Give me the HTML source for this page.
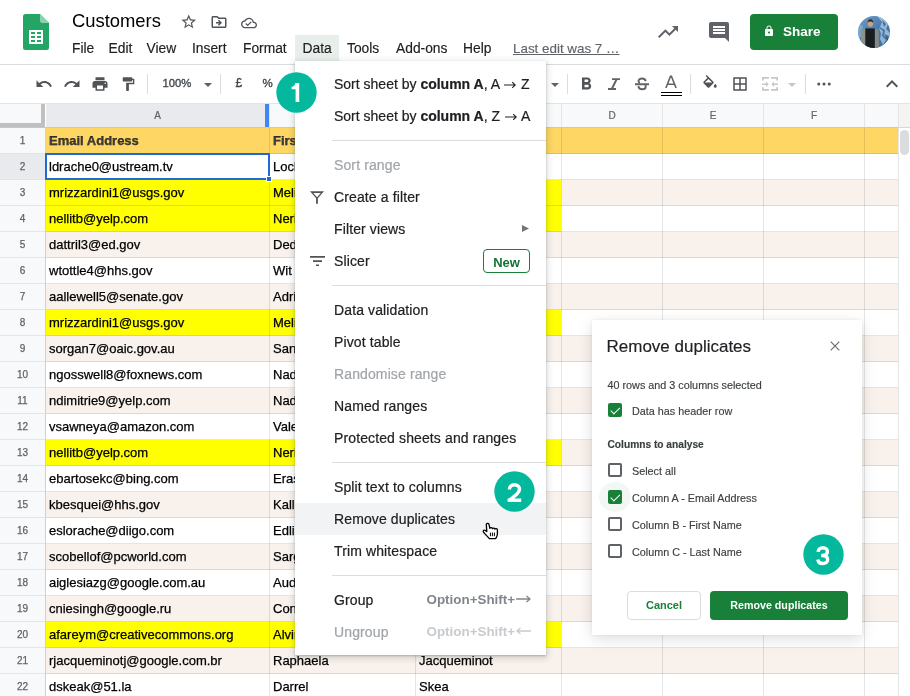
<!DOCTYPE html>
<html><head><meta charset="utf-8">
<style>
*{box-sizing:border-box;margin:0;padding:0}
html,body{width:910px;height:696px;overflow:hidden;background:#fff;font-family:"Liberation Sans",sans-serif;color:#202124}
#root{position:absolute;left:0;top:0;width:910px;height:696px;will-change:transform}
.a{position:absolute}
.t{position:absolute;white-space:nowrap}
.mn{position:absolute;top:39px;font-size:13.8px;color:#202124;line-height:20px;white-space:nowrap;-webkit-text-stroke:.15px currentColor}
.ic{position:absolute;fill:#505357}
.sep{position:absolute;top:74px;width:1px;height:20px;background:#dadce0}
.rh{left:0;width:45px;height:25px;font-size:10px;color:#5f6368;text-align:center;line-height:26px;-webkit-text-stroke:.25px #5f6368}
.cell{position:absolute;height:25px;font-size:13px;line-height:26px;padding-left:3px;white-space:nowrap;overflow:hidden;color:#000;-webkit-text-stroke:.25px #000}
.colh{position:absolute;top:104px;height:23px;font-size:10px;color:#5f6368;text-align:center;line-height:23px;background:#f8f9fa;-webkit-text-stroke:.2px #5f6368}
#menu{position:absolute;left:295px;top:61px;width:251px;height:594px;background:#fff;border-radius:0;box-shadow:0 2px 6px 2px rgba(60,64,67,.15),0 1px 2px rgba(60,64,67,.3)}
.mi{position:absolute;left:39px;font-size:14px;color:#202124;white-space:nowrap;line-height:16px;letter-spacing:.12px;-webkit-text-stroke:.2px currentColor}
.dis{color:#a0a4a8}
.msep{position:absolute;left:37px;width:214px;height:1px;background:#dadce0}
.badge{position:absolute;width:41px;height:41px;border-radius:50%;background:#04b89e;color:#fff;font-size:24px;font-weight:bold;text-align:center;line-height:44px}
#dlg{position:absolute;left:592px;top:320px;width:270px;height:315px;background:#fff;border-radius:0;box-shadow:0 4px 14px rgba(0,0,0,.13),0 0 3px rgba(0,0,0,.08)}
.dt{position:absolute;white-space:nowrap;font-size:10.8px;color:#3c4043;line-height:14px;-webkit-text-stroke:.15px #3c4043}
.cb{position:absolute;left:16px;width:14px;height:14px;border:2px solid #5f6368;border-radius:2px}
.cbon{background:#188038;border-color:#188038}
.cbon::after{content:"";position:absolute;left:2.8px;top:-0.2px;width:3.6px;height:7.6px;border:solid #fff;border-width:0 1.9px 1.9px 0;transform:rotate(45deg)}
</style></head><body><div id="root">

<!-- ===== GRID ===== -->
<div class="a" style="left:46px;top:128px;width:852px;height:26px;background:#fdd663"></div>
<div class="a rh" style="top:128px;background:#f8f9fa">1</div>
<div class="cell" style="left:46px;top:128px;width:223px;font-weight:bold;color:#3c3c3c;">Email Address</div>
<div class="cell" style="left:270px;top:128px;width:145px;font-weight:bold;color:#3c3c3c;">First Name</div>
<div class="cell" style="left:416px;top:128px;width:145px;font-weight:bold;color:#3c3c3c;">Last Name</div>
<div class="a" style="left:46px;top:154px;width:852px;height:26px;background:#fff"></div>
<div class="a rh" style="top:154px;background:#e8eaed">2</div>
<div class="cell" style="left:46px;top:154px;width:223px;">ldrache0@ustream.tv</div>
<div class="cell" style="left:270px;top:154px;width:145px;">Lockwood</div>
<div class="cell" style="left:416px;top:154px;width:145px;">Drache</div>
<div class="a" style="left:46px;top:180px;width:852px;height:26px;background:#f8f1ec"></div>
<div class="a" style="left:46px;top:180px;width:515px;height:26px;background:#ffff00"></div>
<div class="a rh" style="top:180px;background:#f8f9fa">3</div>
<div class="cell" style="left:46px;top:180px;width:223px;">mrizzardini1@usgs.gov</div>
<div class="cell" style="left:270px;top:180px;width:145px;">Melisande</div>
<div class="cell" style="left:416px;top:180px;width:145px;">Rizzardini</div>
<div class="a" style="left:46px;top:206px;width:852px;height:26px;background:#fff"></div>
<div class="a" style="left:46px;top:206px;width:515px;height:26px;background:#ffff00"></div>
<div class="a rh" style="top:206px;background:#f8f9fa">4</div>
<div class="cell" style="left:46px;top:206px;width:223px;">nellitb@yelp.com</div>
<div class="cell" style="left:270px;top:206px;width:145px;">Nerissa</div>
<div class="cell" style="left:416px;top:206px;width:145px;">Ellit</div>
<div class="a" style="left:46px;top:232px;width:852px;height:26px;background:#f8f1ec"></div>
<div class="a rh" style="top:232px;background:#f8f9fa">5</div>
<div class="cell" style="left:46px;top:232px;width:223px;">dattril3@ed.gov</div>
<div class="cell" style="left:270px;top:232px;width:145px;">Dedie</div>
<div class="cell" style="left:416px;top:232px;width:145px;">Attril</div>
<div class="a" style="left:46px;top:258px;width:852px;height:26px;background:#fff"></div>
<div class="a rh" style="top:258px;background:#f8f9fa">6</div>
<div class="cell" style="left:46px;top:258px;width:223px;">wtottle4@hhs.gov</div>
<div class="cell" style="left:270px;top:258px;width:145px;">Wit</div>
<div class="cell" style="left:416px;top:258px;width:145px;">Tottle</div>
<div class="a" style="left:46px;top:284px;width:852px;height:26px;background:#f8f1ec"></div>
<div class="a rh" style="top:284px;background:#f8f9fa">7</div>
<div class="cell" style="left:46px;top:284px;width:223px;">aallewell5@senate.gov</div>
<div class="cell" style="left:270px;top:284px;width:145px;">Adriena</div>
<div class="cell" style="left:416px;top:284px;width:145px;">Allewell</div>
<div class="a" style="left:46px;top:310px;width:852px;height:26px;background:#fff"></div>
<div class="a" style="left:46px;top:310px;width:515px;height:26px;background:#ffff00"></div>
<div class="a rh" style="top:310px;background:#f8f9fa">8</div>
<div class="cell" style="left:46px;top:310px;width:223px;">mrizzardini1@usgs.gov</div>
<div class="cell" style="left:270px;top:310px;width:145px;">Melisande</div>
<div class="cell" style="left:416px;top:310px;width:145px;">Rizzardini</div>
<div class="a" style="left:46px;top:336px;width:852px;height:26px;background:#f8f1ec"></div>
<div class="a rh" style="top:336px;background:#f8f9fa">9</div>
<div class="cell" style="left:46px;top:336px;width:223px;">sorgan7@oaic.gov.au</div>
<div class="cell" style="left:270px;top:336px;width:145px;">Sandy</div>
<div class="cell" style="left:416px;top:336px;width:145px;">Organ</div>
<div class="a" style="left:46px;top:362px;width:852px;height:26px;background:#fff"></div>
<div class="a rh" style="top:362px;background:#f8f9fa">10</div>
<div class="cell" style="left:46px;top:362px;width:223px;">ngosswell8@foxnews.com</div>
<div class="cell" style="left:270px;top:362px;width:145px;">Nadia</div>
<div class="cell" style="left:416px;top:362px;width:145px;">Gosswell</div>
<div class="a" style="left:46px;top:388px;width:852px;height:26px;background:#f8f1ec"></div>
<div class="a rh" style="top:388px;background:#f8f9fa">11</div>
<div class="cell" style="left:46px;top:388px;width:223px;">ndimitrie9@yelp.com</div>
<div class="cell" style="left:270px;top:388px;width:145px;">Nadine</div>
<div class="cell" style="left:416px;top:388px;width:145px;">Dimitrie</div>
<div class="a" style="left:46px;top:414px;width:852px;height:26px;background:#fff"></div>
<div class="a rh" style="top:414px;background:#f8f9fa">12</div>
<div class="cell" style="left:46px;top:414px;width:223px;">vsawneya@amazon.com</div>
<div class="cell" style="left:270px;top:414px;width:145px;">Valera</div>
<div class="cell" style="left:416px;top:414px;width:145px;">Sawney</div>
<div class="a" style="left:46px;top:440px;width:852px;height:26px;background:#f8f1ec"></div>
<div class="a" style="left:46px;top:440px;width:515px;height:26px;background:#ffff00"></div>
<div class="a rh" style="top:440px;background:#f8f9fa">13</div>
<div class="cell" style="left:46px;top:440px;width:223px;">nellitb@yelp.com</div>
<div class="cell" style="left:270px;top:440px;width:145px;">Nerissa</div>
<div class="cell" style="left:416px;top:440px;width:145px;">Ellit</div>
<div class="a" style="left:46px;top:466px;width:852px;height:26px;background:#fff"></div>
<div class="a rh" style="top:466px;background:#f8f9fa">14</div>
<div class="cell" style="left:46px;top:466px;width:223px;">ebartosekc@bing.com</div>
<div class="cell" style="left:270px;top:466px;width:145px;">Erasmus</div>
<div class="cell" style="left:416px;top:466px;width:145px;">Bartosek</div>
<div class="a" style="left:46px;top:492px;width:852px;height:26px;background:#f8f1ec"></div>
<div class="a rh" style="top:492px;background:#f8f9fa">15</div>
<div class="cell" style="left:46px;top:492px;width:223px;">kbesquei@hhs.gov</div>
<div class="cell" style="left:270px;top:492px;width:145px;">Kalli</div>
<div class="cell" style="left:416px;top:492px;width:145px;">Besque</div>
<div class="a" style="left:46px;top:518px;width:852px;height:26px;background:#fff"></div>
<div class="a rh" style="top:518px;background:#f8f9fa">16</div>
<div class="cell" style="left:46px;top:518px;width:223px;">eslorache@diigo.com</div>
<div class="cell" style="left:270px;top:518px;width:145px;">Edlin</div>
<div class="cell" style="left:416px;top:518px;width:145px;">Slorache</div>
<div class="a" style="left:46px;top:544px;width:852px;height:26px;background:#f8f1ec"></div>
<div class="a rh" style="top:544px;background:#f8f9fa">17</div>
<div class="cell" style="left:46px;top:544px;width:223px;">scobellof@pcworld.com</div>
<div class="cell" style="left:270px;top:544px;width:145px;">Sargent</div>
<div class="cell" style="left:416px;top:544px;width:145px;">Cobello</div>
<div class="a" style="left:46px;top:570px;width:852px;height:26px;background:#fff"></div>
<div class="a rh" style="top:570px;background:#f8f9fa">18</div>
<div class="cell" style="left:46px;top:570px;width:223px;">aiglesiazg@google.com.au</div>
<div class="cell" style="left:270px;top:570px;width:145px;">Audie</div>
<div class="cell" style="left:416px;top:570px;width:145px;">Iglesiaz</div>
<div class="a" style="left:46px;top:596px;width:852px;height:26px;background:#f8f1ec"></div>
<div class="a rh" style="top:596px;background:#f8f9fa">19</div>
<div class="cell" style="left:46px;top:596px;width:223px;">cniesingh@google.ru</div>
<div class="cell" style="left:270px;top:596px;width:145px;">Conny</div>
<div class="cell" style="left:416px;top:596px;width:145px;">Niesing</div>
<div class="a" style="left:46px;top:622px;width:852px;height:26px;background:#fff"></div>
<div class="a" style="left:46px;top:622px;width:515px;height:26px;background:#ffff00"></div>
<div class="a rh" style="top:622px;background:#f8f9fa">20</div>
<div class="cell" style="left:46px;top:622px;width:223px;">afareym@creativecommons.org</div>
<div class="cell" style="left:270px;top:622px;width:145px;">Alvina</div>
<div class="cell" style="left:416px;top:622px;width:145px;">Farey</div>
<div class="a" style="left:46px;top:648px;width:852px;height:26px;background:#f8f1ec"></div>
<div class="a rh" style="top:648px;background:#f8f9fa">21</div>
<div class="cell" style="left:46px;top:648px;width:223px;">rjacqueminotj@google.com.br</div>
<div class="cell" style="left:270px;top:648px;width:145px;">Raphaela</div>
<div class="cell" style="left:416px;top:648px;width:145px;">Jacqueminot</div>
<div class="a" style="left:46px;top:674px;width:852px;height:26px;background:#fff"></div>
<div class="a rh" style="top:674px;background:#f8f9fa">22</div>
<div class="cell" style="left:46px;top:674px;width:223px;">dskeak@51.la</div>
<div class="cell" style="left:270px;top:674px;width:145px;">Darrel</div>
<div class="cell" style="left:416px;top:674px;width:145px;">Skea</div>
<div class="a" style="left:0;top:153px;width:898px;height:1px;background:rgba(0,0,0,.10)"></div>
<div class="a" style="left:0;top:179px;width:898px;height:1px;background:rgba(0,0,0,.10)"></div>
<div class="a" style="left:0;top:205px;width:898px;height:1px;background:rgba(0,0,0,.10)"></div>
<div class="a" style="left:0;top:231px;width:898px;height:1px;background:rgba(0,0,0,.10)"></div>
<div class="a" style="left:0;top:257px;width:898px;height:1px;background:rgba(0,0,0,.10)"></div>
<div class="a" style="left:0;top:283px;width:898px;height:1px;background:rgba(0,0,0,.10)"></div>
<div class="a" style="left:0;top:309px;width:898px;height:1px;background:rgba(0,0,0,.10)"></div>
<div class="a" style="left:0;top:335px;width:898px;height:1px;background:rgba(0,0,0,.10)"></div>
<div class="a" style="left:0;top:361px;width:898px;height:1px;background:rgba(0,0,0,.10)"></div>
<div class="a" style="left:0;top:387px;width:898px;height:1px;background:rgba(0,0,0,.10)"></div>
<div class="a" style="left:0;top:413px;width:898px;height:1px;background:rgba(0,0,0,.10)"></div>
<div class="a" style="left:0;top:439px;width:898px;height:1px;background:rgba(0,0,0,.10)"></div>
<div class="a" style="left:0;top:465px;width:898px;height:1px;background:rgba(0,0,0,.10)"></div>
<div class="a" style="left:0;top:491px;width:898px;height:1px;background:rgba(0,0,0,.10)"></div>
<div class="a" style="left:0;top:517px;width:898px;height:1px;background:rgba(0,0,0,.10)"></div>
<div class="a" style="left:0;top:543px;width:898px;height:1px;background:rgba(0,0,0,.10)"></div>
<div class="a" style="left:0;top:569px;width:898px;height:1px;background:rgba(0,0,0,.10)"></div>
<div class="a" style="left:0;top:595px;width:898px;height:1px;background:rgba(0,0,0,.10)"></div>
<div class="a" style="left:0;top:621px;width:898px;height:1px;background:rgba(0,0,0,.10)"></div>
<div class="a" style="left:0;top:647px;width:898px;height:1px;background:rgba(0,0,0,.10)"></div>
<div class="a" style="left:0;top:673px;width:898px;height:1px;background:rgba(0,0,0,.10)"></div>
<div class="a" style="left:0;top:699px;width:898px;height:1px;background:rgba(0,0,0,.10)"></div>
<div class="a" style="left:45px;top:128px;width:1px;height:568px;background:#cfd0d1"></div>
<div class="a" style="left:269px;top:103px;width:1px;height:593px;background:rgba(0,0,0,.10)"></div>
<div class="a" style="left:415px;top:103px;width:1px;height:593px;background:rgba(0,0,0,.10)"></div>
<div class="a" style="left:561px;top:103px;width:1px;height:593px;background:rgba(0,0,0,.10)"></div>
<div class="a" style="left:662px;top:103px;width:1px;height:593px;background:rgba(0,0,0,.10)"></div>
<div class="a" style="left:763px;top:103px;width:1px;height:593px;background:rgba(0,0,0,.10)"></div>
<div class="a" style="left:864px;top:103px;width:1px;height:593px;background:rgba(0,0,0,.10)"></div>
<div class="a" style="left:898px;top:103px;width:1px;height:593px;background:rgba(0,0,0,.10)"></div>

<!-- column headers -->
<div class="a" style="left:0;top:103px;width:910px;height:1px;background:#e2e3e3"></div>
<div class="a" style="left:0;top:127px;width:898px;height:1px;background:#c8c8c8"></div>
<div class="a" style="left:0;top:104px;width:41px;height:19px;background:#f8f9fa"></div>
<div class="a" style="left:41px;top:104px;width:4px;height:23px;background:#c0c0c0"></div>
<div class="a" style="left:0;top:123px;width:45px;height:4px;background:#c0c0c0"></div>
<div class="colh" style="left:46px;width:223px;background:#e8eaed">A</div>
<div class="a" style="left:265px;top:104px;width:4px;height:23px;background:#4285f4"></div>
<div class="colh" style="left:270px;width:145px">B</div>
<div class="colh" style="left:416px;width:145px">C</div>
<div class="colh" style="left:562px;width:100px">D</div>
<div class="colh" style="left:663px;width:100px">E</div>
<div class="colh" style="left:764px;width:100px">F</div>
<div class="colh" style="left:865px;width:33px"></div>
<div class="a" style="left:899px;top:104px;width:11px;height:592px;background:#fff"></div>
<div class="a" style="left:899px;top:104px;width:11px;height:23px;background:#f4f4f4"></div>
<div class="a" style="left:898px;top:127px;width:12px;height:1px;background:#d8d8d8"></div>
<div class="a" style="left:900px;top:129.5px;width:9px;height:25px;border-radius:4.5px;background:#dadce0"></div>
<!-- selected cell A2 -->
<div class="a" style="left:45px;top:153px;width:225px;height:27px;border:2px solid #1f6bd6"></div>
<div class="a" style="left:266px;top:176px;width:6px;height:6px;background:#1f6bd6;border:1px solid #fff"></div>

<!-- ===== HEADER ===== -->
<div class="a" style="left:0;top:0;width:910px;height:64px;background:#fff"></div>
<svg class="a" style="left:23px;top:14px" width="26" height="36" viewBox="0 0 26 36">
  <path d="M2.5 0H17L26 9V33.5A2.5 2.5 0 0 1 23.5 36H2.5A2.5 2.5 0 0 1 0 33.5V2.5A2.5 2.5 0 0 1 2.5 0Z" fill="#23a566"/>
  <path d="M17 0L26 9H19.5A2.5 2.5 0 0 1 17 6.5Z" fill="#8ed1b1"/>
  <rect x="6" y="16" width="14" height="14" fill="#fff"/>
  <rect x="8" y="18" width="4" height="2" fill="#23a566"/><rect x="14" y="18" width="4" height="2" fill="#23a566"/>
  <rect x="8" y="22" width="4" height="2" fill="#23a566"/><rect x="14" y="22" width="4" height="2" fill="#23a566"/>
  <rect x="8" y="26" width="4" height="2" fill="#23a566"/><rect x="14" y="26" width="4" height="2" fill="#23a566"/>
</svg>
<div class="t" style="left:72px;top:11px;font-size:18.4px;line-height:20px;color:#000">Customers</div>
<!-- star -->
<svg class="ic" style="left:180px;top:13px" width="17.5" height="17.5" viewBox="0 0 24 24"><path d="M22 9.24l-7.19-.62L12 2 9.19 8.63 2 9.24l5.46 4.73L5.82 21 12 17.27 18.18 21l-1.63-7.03L22 9.24zM12 15.4l-3.76 2.27 1-4.28-3.32-2.88 4.38-.38L12 6.1l1.71 4.04 4.38.38-3.32 2.88 1 4.28L12 15.4z"/></svg>
<!-- folder move -->
<svg class="ic" style="left:209.5px;top:12.8px" width="18" height="18" viewBox="0 0 24 24"><path d="M20 6h-8l-2-2H4c-1.1 0-1.99.9-1.99 2L2 18c0 1.1.9 2 2 2h16c1.1 0 2-.9 2-2V8c0-1.1-.9-2-2-2zm0 12H4V6h5.17l2 2H20v10zm-7.84-6H8v2h4.16l-1.59 1.59L11.99 17 16 13.01 11.99 9l-1.41 1.41L12.16 12z"/></svg>
<!-- cloud done -->
<svg class="ic" style="left:241px;top:14.5px" width="16" height="16" viewBox="0 0 24 24"><path d="M19.35 10.04C18.67 6.59 15.64 4 12 4 9.11 4 6.6 5.64 5.35 8.04 2.34 8.36 0 10.91 0 14c0 3.310 2.69 6 6 6h13c2.76 0 5-2.24 5-5 0-2.64-2.05-4.78-4.650-4.96zM19 18H6c-2.21 0-4-1.79-4-4 0-2.05 1.53-3.76 3.56-3.97l1.07-.11.5-.95C8.08 7.14 9.94 6 12 6c2.62 0 4.88 1.860 5.39 4.43l.3 1.5 1.53.11c1.56.1 2.78 1.41 2.78 2.96 0 1.65-1.35 3-3 3zm-9-3.82l-2.09-2.09L6.5 13.5 10 17l6.01-6.01-1.41-1.41z"/></svg>

<div class="mn" style="left:72px">File</div>
<div class="mn" style="left:108.5px">Edit</div>
<div class="mn" style="left:146.5px">View</div>
<div class="mn" style="left:192px">Insert</div>
<div class="mn" style="left:243px">Format</div>
<div class="a" style="left:295px;top:35px;width:44px;height:26px;background:#e8efeb"></div>
<div class="mn" style="left:302.5px">Data</div>
<div class="mn" style="left:347px">Tools</div>
<div class="mn" style="left:396px">Add-ons</div>
<div class="mn" style="left:463px">Help</div>
<div class="mn" style="left:513px;color:#5f6368;text-decoration:underline;font-size:13.4px">Last edit was 7 …</div>

<!-- trending -->
<svg class="ic" style="left:656px;top:20px;fill:#5f6368" width="24" height="24" viewBox="0 0 24 24"><path d="M16 6l2.29 2.29-4.88 4.88-4-4L2 16.59 3.41 18l6-6 4 4 6.3-6.29L22 12V6z"/></svg>
<!-- comment -->
<svg class="ic" style="left:707px;top:20px;fill:#5f6368" width="24" height="24" viewBox="0 0 24 24"><path d="M21.99 4c0-1.1-.89-2-1.99-2H4c-1.1 0-2 .9-2 2v12c0 1.1.9 2 2 2h14l4 4-.01-18zM18 14H6v-2h12v2zm0-3H6V9h12v2zm0-3H6V6h12v2z"/></svg>
<!-- share -->
<div class="a" style="left:750px;top:14px;width:88px;height:36px;background:#188038;border-radius:4px"></div>
<svg class="a" style="left:763px;top:25px" width="12" height="12" viewBox="0 0 24 24" fill="#fff"><path d="M18 8h-1V6c0-2.76-2.24-5-5-5S7 3.24 7 6v2H6c-1.1 0-2 .9-2 2v10c0 1.1.9 2 2 2h12c1.1 0 2-.9 2-2V10c0-1.1-.9-2-2-2zm-6 9c-1.1 0-2-.9-2-2s.9-2 2-2 2 .9 2 2-.9 2-2 2zm3.1-9H8.9V6c0-1.71 1.39-3.1 3.1-3.1 1.71 0 3.1 1.39 3.1 3.1v2z"/></svg>
<div class="t" style="left:783px;top:24px;font-size:13.5px;line-height:16px;font-weight:bold;color:#fff">Share</div>
<!-- avatar -->
<svg class="a" style="left:858px;top:16px" width="32" height="32" viewBox="0 0 32 32">
  <defs><clipPath id="cp"><circle cx="16" cy="16" r="16"/></clipPath>
  <linearGradient id="ag" x1="0" y1="0" x2="1" y2="1"><stop offset="0" stop-color="#6f9cc4"/><stop offset=".5" stop-color="#4a7eb0"/><stop offset="1" stop-color="#3a6894"/></linearGradient></defs>
  <g clip-path="url(#cp)">
    <rect width="32" height="32" fill="url(#ag)"/>
    <path d="M19 0l5 6-2 5 5 3-1 6 6 3v-6l-4-4 2-5-5-8z" fill="#a9cbe6" opacity=".8"/>
    <path d="M21 12l4 3-1 5 4 4-3 5-3-6 1-5z" fill="#d7e8f3" opacity=".55"/>
    <path d="M24 4l4 4-2 3z M26 18l5 2-1 5z" fill="#2b4d70" opacity=".7"/>
    <path d="M0 8l5 2-1 6 3 4-7 2z" fill="#8fb6d6" opacity=".6"/>
    <path d="M3 13.5l4.5-1.5 2 20H3z" fill="#8d918a"/>
    <path d="M16.5 12.5l4 1.5.5 18h-4.5z" fill="#868a82"/>
    <rect x="7.3" y="12.4" width="9.5" height="20" fill="#1b1e20"/>
    <ellipse cx="12.4" cy="7.6" rx="2.7" ry="3.3" fill="#c8a288"/>
    <path d="M9.7 7c0-2.4 1.2-3.7 2.8-3.7s2.8 1.3 2.6 3.6c-.6-1-1.5-1.4-2.7-1.4S10.4 5.9 9.7 7z" fill="#2a231e"/>
  </g>
</svg>

<!-- ===== TOOLBAR ===== -->
<div class="a" style="left:0;top:64px;width:910px;height:1px;background:#dadce0"></div>
<svg class="ic" style="left:35px;top:75px" width="18" height="18" viewBox="0 0 24 24"><path d="M12.5 8c-2.65 0-5.05.99-6.9 2.6L2 7v9h9l-3.62-3.62c1.39-1.16 3.160-1.88 5.12-1.88 3.54 0 6.55 2.31 7.6 5.5l2.37-.78C21.08 11.03 17.15 8 12.5 8z"/></svg>
<svg class="ic" style="left:63px;top:75px" width="18" height="18" viewBox="0 0 24 24"><path d="M18.4 10.6C16.55 8.99 14.15 8 11.5 8c-4.65 0-8.58 3.03-9.96 7.22L3.9 16c1.05-3.19 4.05-5.5 7.6-5.5 1.95 0 3.73.72 5.12 1.88L13 16h9V7l-3.6 3.6z"/></svg>
<svg class="ic" style="left:91px;top:75px" width="18" height="18" viewBox="0 0 24 24"><path d="M19 8H5c-1.66 0-3 1.34-3 3v6h4v4h12v-4h4v-6c0-1.66-1.34-3-3-3zm-3 11H8v-5h8v5zm3-7c-.55 0-1-.45-1-1s.45-1 1-1 1 .45 1 1-.45 1-1 1zm-1-9H6v4h12V3z"/></svg>
<svg class="ic" style="left:119.7px;top:75.6px" width="16.4" height="16.4" viewBox="0 0 24 24"><path d="M18 4V3c0-.55-.45-1-1-1H5c-.55 0-1 .45-1 1v4c0 .55.45 1 1 1h12c.55 0 1-.45 1-1V6h1v4H9v11c0 .55.45 1 1 1h2c.55 0 1-.45 1-1v-9h8V4h-3z"/></svg>
<div class="sep" style="left:147px"></div>
<div class="t" style="left:162.5px;top:77px;font-size:11.3px;line-height:12px;color:#45494d;-webkit-text-stroke:.35px #45494d">100%</div>
<svg class="a" style="left:204px;top:82.5px" width="8" height="4" viewBox="0 0 8 4"><path d="M0 0h8L4 4z" fill="#5f6368"/></svg>
<div class="sep" style="left:220px"></div>
<div class="t" style="left:235.5px;top:77px;font-size:12px;line-height:12px;color:#45494d;-webkit-text-stroke:.35px #45494d">£</div>
<div class="t" style="left:262.5px;top:77px;font-size:11.5px;line-height:12px;color:#45494d;-webkit-text-stroke:.35px #45494d">%</div>

<svg class="a" style="left:550.8px;top:82.5px" width="8" height="4" viewBox="0 0 8 4"><path d="M0 0h8L4 4z" fill="#5f6368"/></svg>
<div class="sep" style="left:567px"></div>
<svg class="ic" style="left:575.5px;top:73.8px" width="20.5" height="20.5" viewBox="0 0 24 24"><path d="M15.6 10.79c.97-.67 1.65-1.77 1.65-2.79 0-2.26-1.75-4-4-4H7v14h7.04c2.09 0 3.71-1.7 3.71-3.79 0-1.52-.86-2.82-2.15-3.42zM10 6.5h3c.83 0 1.5.67 1.5 1.5s-.67 1.5-1.5 1.5h-3v-3zm3.5 9H10v-3h3.5c.83 0 1.5.67 1.5 1.5s-.67 1.5-1.5 1.5z"/></svg>
<svg class="a" style="left:605px;top:75px" width="18" height="18" viewBox="0 0 18 18"><path d="M7 3.2h8v1.9H7zM3 13.1h8V15H3zM10.4 4.5h2.2L8.1 13.6H5.9z" fill="#5f6368"/></svg>
<svg class="a" style="left:633px;top:75px" width="18" height="18" viewBox="0 0 18 18"><path d="M12.6 6.3C12.5 4.6 11.1 3.5 9 3.5 6.9 3.5 5.5 4.6 5.5 6.1c0 .9.5 1.5 1.2 1.9M2 9.3h14M5.4 11.2c.2 1.9 1.7 3.1 3.7 3.1 2.1 0 3.6-1 3.6-2.6 0-.6-.2-1.1-.6-1.5" stroke="#5f6368" stroke-width="1.9" fill="none"/></svg>
<svg class="a" style="left:664px;top:75px" width="14" height="14" viewBox="0 0 14 14"><path d="M1.9 13L6.5 1.2h.9L12.1 13M3.7 9.2h6.6" stroke="#5f6368" stroke-width="1.6" fill="none"/></svg>
<div class="a" style="left:661px;top:92px;width:21px;height:1px;background:#000"></div>
<div class="a" style="left:661px;top:95px;width:21px;height:1px;background:#000"></div>
<div class="sep" style="left:690px"></div>
<svg class="ic" style="left:701px;top:74.5px" width="18" height="18" viewBox="0 0 24 24"><path d="M16.56 8.94L7.62 0 6.21 1.41l2.38 2.38-5.15 5.15c-.59.59-.59 1.54 0 2.12l5.5 5.5c.29.29.68.44 1.06.44s.77-.15 1.06-.44l5.5-5.5c.59-.58.59-1.53 0-2.12zM5.21 10L10 5.21 14.79 10H5.21zM19 11.5s-2 2.17-2 3.5c0 1.1.9 2 2 2s2-.9 2-2c0-1.33-2-3.5-2-3.5z"/></svg>
<svg class="ic" style="left:731px;top:75px" width="18" height="18" viewBox="0 0 24 24"><path d="M3 3v18h18V3H3zm8 16H5v-6h6v6zm0-8H5V5h6v6zm8 8h-6v-6h6v6zm0-8h-6V5h6v6z"/></svg>
<svg class="a" style="left:760px;top:75px;fill:#c6c6c6" width="20" height="18" viewBox="0 0 20 18"><path d="M2.1 2.1h6.8v1.7H3.8v1.8H2.1zM11.2 2.1H18v3.5h-1.7V3.8h-5.1zM2.1 15.7h6.8V14H3.8v-1.8H2.1zM18 15.7h-6.8V14h5.1v-1.8H18zM2.1 8.4h5v1.5h-5zM6.1 6.4L8.6 9.15 6.1 11.9zM12.9 8.4H18v1.5h-5.1zM13.9 11.9L11.4 9.15 13.9 6.4z"/></svg>
<svg class="a" style="left:788px;top:82.5px" width="8" height="4" viewBox="0 0 8 4"><path d="M0 0h8L4 4z" fill="#c4c7c5"/></svg>
<div class="sep" style="left:805px"></div>
<svg class="ic" style="left:815px;top:75px" width="18" height="18" viewBox="0 0 24 24"><circle cx="5" cy="12" r="2"/><circle cx="12" cy="12" r="2"/><circle cx="19" cy="12" r="2"/></svg>
<svg class="ic" style="left:880px;top:71.5px" width="24" height="24" viewBox="0 0 24 24"><path d="M7.41 15.41L12 10.83l4.59 4.58L18 14l-6-6-6 6z"/></svg>

<!-- ===== DATA MENU ===== -->
<div id="menu">
  <div class="mi" style="top:15px;letter-spacing:0">Sort sheet by <b>column A</b>, A <svg style="display:inline-block;vertical-align:0px;margin:0 1px" width="12" height="8" viewBox="0 0 12 8"><path d="M0 4H11.2M8.2 1.2L11.2 4 8.2 6.8" stroke="#202124" stroke-width="1.1" fill="none"/></svg> Z</div>
  <div class="mi" style="top:47px;letter-spacing:0">Sort sheet by <b>column A</b>, Z <svg style="display:inline-block;vertical-align:0px;margin:0 1px" width="12" height="8" viewBox="0 0 12 8"><path d="M0 4H11.2M8.2 1.2L11.2 4 8.2 6.8" stroke="#202124" stroke-width="1.1" fill="none"/></svg> A</div>
  <div class="msep" style="top:79px"></div>
  <div class="mi dis" style="top:96px">Sort range</div>
  <svg class="ic" style="left:14px;top:129px" width="16" height="16" viewBox="0 0 16 16"><path fill-rule="evenodd" d="M1 1.2h14L8.9 8.2V13.8H7.1V8.2zM4.2 3L8 7.3 11.8 3z"/></svg>
  <div class="mi" style="top:128px">Create a filter</div>
  <div class="mi" style="top:160px">Filter views</div>
  <svg class="a" style="left:227px;top:164px" width="7" height="7" viewBox="0 0 7 7"><path d="M0 0L7 3.5 0 7z" fill="#757575"/></svg>
  <svg class="ic" style="left:14px;top:193px" width="16" height="16" viewBox="0 0 16 16"><path d="M1 2h15v1.7H1zM4 6.2h9v1.7H4zM7 10.4h3v1.7H7z"/></svg>
  <div class="mi" style="top:192px">Slicer</div>
  <div class="a" style="left:188px;top:188px;width:47px;height:24px;border:1px solid #188038;border-radius:4px;color:#137333;font-size:13px;font-weight:bold;text-align:center;line-height:25px">New</div>
  <div class="msep" style="top:224px"></div>
  <div class="mi" style="top:241px">Data validation</div>
  <div class="mi" style="top:273px">Pivot table</div>
  <div class="mi dis" style="top:305px">Randomise range</div>
  <div class="mi" style="top:337px">Named ranges</div>
  <div class="mi" style="top:369px">Protected sheets and ranges</div>
  <div class="msep" style="top:401px"></div>
  <div class="mi" style="top:418px">Split text to columns</div>
  <div class="a" style="left:0;top:442px;width:251px;height:32px;background:#f1f3f4"></div>
  <div class="mi" style="top:450px">Remove duplicates</div>
  <div class="mi" style="top:482px">Trim whitespace</div>
  <div class="msep" style="top:514px"></div>
  <div class="mi" style="top:531px">Group</div>
  <div class="t" style="left:131.5px;top:531px;font-size:13.4px;line-height:16px;font-weight:bold;color:#80868b">Option+Shift+<svg style="display:inline-block;vertical-align:1px;margin-left:1px" width="15" height="8" viewBox="0 0 15 8"><path d="M0 4H14M10.5 1L14 4 10.5 7" stroke="#80868b" stroke-width="1.3" fill="none"/></svg></div>
  <div class="mi dis" style="top:563px">Ungroup</div>
  <div class="t" style="left:131.5px;top:563px;font-size:13.4px;line-height:16px;font-weight:bold;color:#c8cbce">Option+Shift+<svg style="display:inline-block;vertical-align:1px;margin-left:1px" width="15" height="8" viewBox="0 0 15 8"><path d="M15 4H1M4.5 1L1 4 4.5 7" stroke="#c8cbce" stroke-width="1.3" fill="none"/></svg></div>
</div>

<!-- ===== DIALOG ===== -->
<div id="dlg">
  <div class="t" style="left:14.5px;top:17px;font-size:17px;line-height:20px;color:#202124;-webkit-text-stroke:.15px #202124">Remove duplicates</div>
  <svg class="a" style="left:238px;top:21px" width="10" height="10" viewBox="0 0 10 10"><path d="M0.7 0.7L9.3 9.3M9.3 0.7L0.7 9.3" stroke="#6a6e73" stroke-width="1.2"/></svg>
  <div class="dt" style="left:15.5px;top:58px">40 rows and 3 columns selected</div>
  <div class="cb cbon" style="top:83px"></div>
  <div class="dt" style="left:40px;top:84px">Data has header row</div>
  <div class="dt" style="left:15.5px;top:118px;font-weight:bold;font-size:10.2px">Columns to analyse</div>
  <div class="cb" style="top:143px"></div>
  <div class="dt" style="left:40px;top:144px">Select all</div>
  <div class="a" style="left:7px;top:162px;width:32px;height:30px;border-radius:50%;background:#f3f7f4"></div>
  <div class="cb cbon" style="top:170px"></div>
  <div class="dt" style="left:40px;top:171px">Column A - Email Address</div>
  <div class="cb" style="top:197px"></div>
  <div class="dt" style="left:40px;top:198px">Column B - First Name</div>
  <div class="cb" style="top:224px"></div>
  <div class="dt" style="left:40px;top:225px">Column C - Last Name</div>
  <div class="a" style="left:35px;top:271px;width:74px;height:29px;border:1px solid #dadce0;border-radius:4px;color:#188038;font-size:11px;font-weight:bold;text-align:center;line-height:27px">Cancel</div>
  <div class="a" style="left:118px;top:271px;width:138px;height:29px;background:#188038;border-radius:4px;color:#fff;font-size:10.7px;font-weight:bold;text-align:center;line-height:29px">Remove duplicates</div>
</div>

<!-- badges -->
<svg class="a" style="left:276px;top:72px" width="41" height="41" viewBox="0 0 41 41"><circle cx="20.5" cy="20.5" r="20.2" fill="#04b89e"/><path d="M19.6 10.9H23.2V30H19.6V17.2H15.6V14.9Q18.6 14.3 19.4 10.9Z" fill="#fff"/></svg>
<svg class="a" style="left:494px;top:471px" width="41" height="41" viewBox="0 0 41 41"><circle cx="20.5" cy="20.5" r="20.2" fill="#04b89e"/><path d="M15.4 18.4C15.4 15.5 17.5 13.7 20.4 13.7C23.4 13.7 25.5 15.5 25.5 18.2C25.5 20.2 24.4 21.6 22.9 23L15.6 29.4" stroke="#fff" stroke-width="3.4" fill="none"/><rect x="13.6" y="27.5" width="13.6" height="3.4" fill="#fff"/></svg>
<svg class="a" style="left:803px;top:534px" width="41" height="41" viewBox="0 0 41 41"><circle cx="20.5" cy="20.5" r="20.2" fill="#04b89e"/><path d="M15.1 17.8C15.3 15.3 17.4 13.7 19.9 13.7C22.6 13.7 24.4 15.3 24.4 17.6C24.4 19.9 22.6 21.5 19.6 21.5H18.2M19.6 21.5C22.9 21.5 24.6 23.3 24.6 25.8C24.6 28.1 22.6 29.5 19.9 29.5C17.1 29.5 15.1 28.1 14.9 25.5" stroke="#fff" stroke-width="3.4" fill="none"/></svg>

<!-- cursor -->
<svg class="a" style="left:478px;top:518px" width="26" height="26" viewBox="0 0 26 26">
  <path d="M8.3 6.3C8.3 5.1 10.6 4.9 10.9 6.2L11.9 10.3C12.3 9.4 13.9 9.3 14.3 10.2L14.5 10.7C14.9 9.8 16.5 9.8 16.8 10.7L16.9 11.1C17.4 10.4 19.3 10.5 19.4 11.7L19.4 16C19.4 17.8 18.5 19.2 17.9 20.2L17.6 20.7H11.3L10.9 20.2C9.7 18.8 6.6 15.6 5.5 14.1C4.8 13.1 5.6 11.8 6.6 12.1C7.4 12.3 8.2 13 8.8 13.6Z" fill="#fff" stroke="#000" stroke-width="1.3" stroke-linejoin="round"/>
  <path d="M12.4 14.6v3.6M14.4 14.6v3.6M16.4 14.6v3.6" stroke="#000" stroke-width="1"/>
</svg>

</div></body></html>
